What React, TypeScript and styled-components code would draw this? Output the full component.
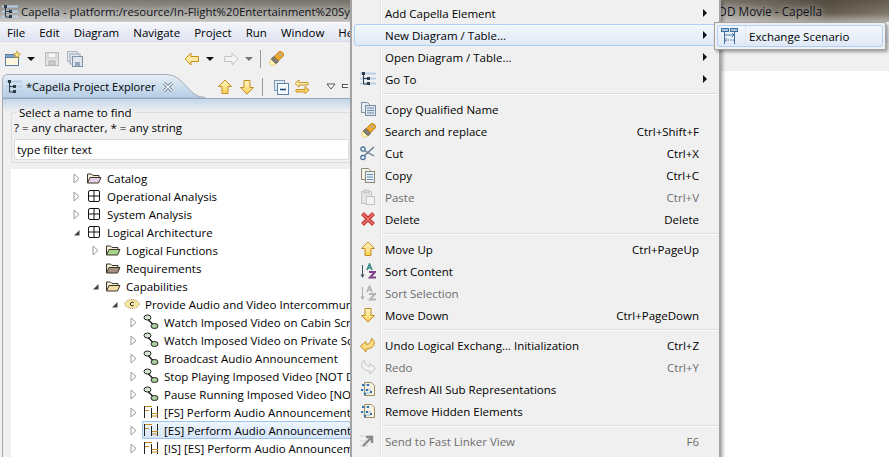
import React from 'react';
import styled, { createGlobalStyle } from 'styled-components';

const Global = createGlobalStyle`
  html, body { margin: 0; padding: 0; background: #f0f0f0; }
  body { font-family: "Open Sans", "Noto Sans", sans-serif; font-size: 11.5px; color: #000; }
  * { box-sizing: border-box; }
`;

const Window = styled.div`
  position: relative;
  width: 889px;
  height: 457px;
  overflow: hidden;
  background: #f0f0f0;
`;

const TitleBar = styled.div`
  height: 22px;
  display: flex;
  align-items: center;
  padding: 1px 67px 0 2px;
  background:
    linear-gradient(180deg, rgba(50, 42, 34, .35) 0%, rgba(255, 255, 255, .0) 60%, rgba(255, 255, 255, .45) 100%),
    linear-gradient(90deg, #a8a7a3 0%, #9a968f 40%, #8d8a83 60%, #9e9a92 80%, #655c50 93%, #7f7769 100%);
`;

const TitleText = styled.span<{ $end?: boolean }>`
  margin-left: ${p => (p.$end ? 'auto' : '3px')};
  font-size: ${p => (p.$end ? '11.8px' : '11.4px')};
  line-height: 21px;
  white-space: nowrap;
  color: #10131a;
  text-shadow: 0 0 6px rgba(255, 255, 255, .75);
`;

const MenuBar = styled.div`
  height: 19px;
  display: flex;
  align-items: center;
  padding-left: 7px;
  gap: 14px;
  background: linear-gradient(180deg, #f4f5fa 0%, #dfe4f3 100%);
  border-top: 1px solid #fafafa;
`;

const MenuBarItem = styled.span`
  line-height: 17px;
  white-space: nowrap;
`;

const ToolBar = styled.div`
  height: 30px;
  display: flex;
  align-items: center;
  padding: 4px 0 0 5px;
  border-top: 1px solid #d8dbe4;
  background: #f0f0f0;
`;

const ToolSlot = styled.span<{ $left?: number }>`
  display: inline-flex;
  margin-left: ${p => p.$left ?? 0}px;
`;

const ToolDivider = styled.span<{ $left: number }>`
  width: 1px;
  height: 18px;
  margin-left: ${p => p.$left}px;
  background: #9a9a9a;
`;

const DropCaret = styled.span<{ $left: number; $muted?: boolean }>`
  width: 0;
  height: 0;
  margin-left: ${p => p.$left}px;
  border-left: 4px solid transparent;
  border-right: 4px solid transparent;
  border-top: 4px solid ${p => (p.$muted ? '#777' : '#111')};
`;

const Workbench = styled.div`
  display: flex;
  height: 386px;
`;

const Explorer = styled.section`
  width: 352px;
  flex: none;
  padding: 3px 0 0 2px;
  overflow: hidden;
`;

const Editor = styled.main`
  flex: 1;
  background: #fff;
`;

const TabStrip = styled.div`
  display: flex;
  align-items: center;
  height: 25px;
  padding-top: 1px;
  border-bottom: 1px solid #97a7b8;
`;

const Tab = styled.div`
  position: relative;
  width: 204px;
  height: 24px;
  flex: none;
  display: flex;
  align-items: center;
  padding-left: 4px;
  gap: 4px;
`;

const TabShape = styled.svg`
  position: absolute;
  left: 0;
  top: -1px;
`;

const TabIcon = styled.span`
  position: relative;
  display: inline-flex;
`;

const TabLabel = styled.span`
  position: relative;
  font-size: 11.1px;
  white-space: nowrap;
  width: 133px;
`;

const PanelBody = styled.div`
  height: 359px;
  padding: 6px 0 0 8px;
  border-left: 1px solid #a8a8a8;
  background: linear-gradient(180deg, #c3d6ea 0px, #f0f0f0 13px);
`;

const FilterGroup = styled.fieldset`
  margin: 0;
  padding: 0 0 1px 2px;
  height: 58px;
  border: 1px solid #d5dfe5;
  border-radius: 3px;
`;

const FilterLegend = styled.legend`
  margin-left: 3px;
  padding: 0 2px;
  line-height: 15px;
`;

const FilterHint = styled.div`
  line-height: 15px;
  margin-bottom: 4px;
`;

const FilterInput = styled.div`
  width: 335px;
  height: 21px;
  padding-left: 2px;
  line-height: 19px;
  background: #fff;
  border: 1px solid #dcdcdc;
  border-radius: 2px;
`;

const Tree = styled.div`
  margin-top: 6px;
  height: 292px;
  background: #fff;
  overflow: hidden;
`;

const TreeRow = styled.div<{ $level: number }>`
  display: flex;
  align-items: center;
  height: 18px;
  padding-left: ${p => 60 + p.$level * 19}px;
  white-space: nowrap;
`;

const Twisty = styled.span`
  width: 11px;
  flex: none;
  display: inline-flex;
  justify-content: center;
`;

const TreeCell = styled.div<{ $selected?: boolean }>`
  flex: 1;
  display: flex;
  align-items: center;
  gap: 5px;
  height: 18px;
  margin-left: 3px;
  border: 1px solid ${p => (p.$selected ? '#9fc5ee' : 'transparent')};
  border-right: none;
  border-radius: 2px 0 0 2px;
  background: ${p => (p.$selected ? 'linear-gradient(180deg, #eef5fd, #d4e5f8)' : 'transparent')};
`;

const ContextMenu = styled.div`
  position: absolute;
  left: 350px;
  top: 0;
  width: 371px;
  height: 470px;
  padding: 2px 2px;
  background: #f0f0f0;
  border-left: 2px solid #a3a3a3;
  border-right: 2px solid #a3a3a3;
  box-shadow: 2px 2px 3px rgba(0, 0, 0, .3);
`;

const MenuRow = styled.div<{ $active?: boolean; $disabled?: boolean }>`
  position: relative;
  display: flex;
  align-items: center;
  height: 22px;
  color: ${p => (p.$disabled ? '#6d6d6d' : '#000')};
  border: 1px solid ${p => (p.$active ? '#aecff7' : 'transparent')};
  border-radius: 3px;
  background: ${p => (p.$active ? 'linear-gradient(180deg, #f3f7fc, #dfe9f6)' : 'transparent')};
`;

const MenuIcon = styled.span`
  width: 25px;
  flex: none;
  display: inline-flex;
  justify-content: center;
`;

const MenuLabel = styled.span`
  flex: 1;
  padding-left: 5px;
  white-space: nowrap;
`;

const MenuShortcut = styled.span`
  white-space: nowrap;
`;

const MenuArrow = styled.span<{ $show?: boolean }>`
  width: 17px;
  flex: none;
  display: inline-flex;
  justify-content: flex-end;
  padding-right: 9px;
  &::after {
    content: '';
    display: ${p => (p.$show ? 'block' : 'none')};
    border-top: 4px solid transparent;
    border-bottom: 4px solid transparent;
    border-left: 4px solid #111;
  }
`;

const MenuSeparator = styled.div`
  height: 8px;
  margin-left: 27px;
  display: flex;
  align-items: center;
  &::before {
    content: '';
    flex: 1;
    height: 2px;
    background: linear-gradient(180deg, #dcdcdc 50%, #fff 50%);
  }
`;

const Gutter = styled.div`
  position: absolute;
  left: 28px;
  top: 0;
  bottom: 0;
  width: 2px;
  background: linear-gradient(90deg, #e2e3e3 50%, #fff 50%);
`;

const SubMenu = styled.div`
  position: absolute;
  left: 714px;
  top: 22px;
  width: 172px;
  height: 28px;
  padding: 2px;
  background: #f0f0f0;
  border: 1px solid #a3a3a3;
  box-shadow: 2px 2px 3px rgba(0, 0, 0, .35);
`;

const SubRow = styled.div`
  position: relative;
  height: 22px;
  display: flex;
  align-items: center;
  padding-left: 3px;
  gap: 11px;
  border: 1px solid #aecff7;
  border-radius: 3px;
  background: linear-gradient(180deg, #f3f7fc, #dfe9f6);
  white-space: nowrap;
`;

const SubGutter = styled.span`
  position: absolute;
  left: 27px;
  top: 0;
  bottom: 0;
  width: 1px;
  background: #dfe5ee;
`;

type IconProps = { color?: string };

const Svg = ({ children, w = 16, h = 16 }: { children: React.ReactNode; w?: number; h?: number }) => (
  <svg width={w} height={h} viewBox={`0 0 ${w} ${h}`} fill="none">{children}</svg>
);

const OutlineIcon = () => (
  <Svg>
    <path d="M0 2.5h16M0 7.5h16M0 12.5h16" stroke="#b9cfe8" strokeWidth="2" />
    <path d="M3.500 2v11h4M3.500 7.500h4" stroke="#2d3a48" />
    <rect x="2" y="1" width="3" height="3" fill="#2d3a48" />
    <rect x="7" y="6" width="3" height="3" fill="#2d3a48" />
    <rect x="7" y="11" width="3" height="3" fill="#2d3a48" />
  </Svg>
);

const NewIcon = () => (
  <Svg>
    <rect x="0.5" y="3.5" width="13" height="11" fill="#fff8dc" stroke="#5b7da3" />
    <rect x="0.5" y="3.5" width="13" height="3" fill="#7fa4cc" stroke="#5b7da3" />
    <path d="M12 0l1 2.500 2.500.5-2 1.500.5 2.500-2-1.400-2 1.400.5-2.500-2-1.500 2.500-.5z" fill="#fde58a" stroke="#b98a1a" strokeWidth=".7" />
  </Svg>
);

const SaveIcon = () => (
  <Svg>
    <path d="M1.5 1.5h13v13h-13z" fill="#e6e6e6" stroke="#b8b8b8" />
    <rect x="4" y="2" width="8" height="5" fill="#f7f7f7" stroke="#c4c4c4" />
    <rect x="5" y="10" width="6" height="4" fill="#cfcfcf" stroke="#b0b0b0" />
  </Svg>
);

const SaveAllIcon = () => (
  <Svg>
    <rect x="0.5" y="0.5" width="10" height="10" fill="#e2e7ec" stroke="#aab6c2" />
    <rect x="3" y="3" width="10" height="10" fill="#e2e7ec" stroke="#9aa8b6" />
    <rect x="5.500" y="5.500" width="10" height="10" fill="#e2e7ec" stroke="#7f92a8" />
    <rect x="8" y="11" width="5" height="4" fill="#98a9bd" />
  </Svg>
);

const ArrowShape = ({ rotate = 0, fill = '#fde9a0', stroke = '#c58d1c' }: { rotate?: number; fill?: string; stroke?: string }) => (
  <Svg>
    <g transform={`rotate(${rotate} 8 8)`}>
      <path d="M1 8l6-6v3.500h7.500v5H7V14z" fill={fill} stroke={stroke} strokeLinejoin="round" />
    </g>
  </Svg>
);

const GoldArrow = ({ rotate }: { rotate: number }) => (
  <svg width="16" height="16" viewBox="0 0 16 16" fill="none">
    <defs>
      <linearGradient id={`gold${rotate}`} x1="0" y1="0" x2="0" y2="1" gradientTransform={`rotate(${-rotate} .5 .5)`}>
        <stop offset="0" stopColor="#fff6c8" />
        <stop offset="1" stopColor="#fbcf57" />
      </linearGradient>
    </defs>
    <g transform={`rotate(${rotate} 8 8)`}>
      <path d="M1 8l6.500-6.500V5h7v6h-7v3.500z" fill={`url(#gold${rotate})`} stroke="#c58d1c" strokeLinejoin="round" />
    </g>
  </svg>
);

const TorchIcon = () => (
  <Svg>
    <g transform="rotate(45 8 8)">
      <path d="M6 15.500h4l1.500-4.500h-7z" fill="#fff4b8" stroke="#e6bd56" strokeWidth=".7" />
      <rect x="4.500" y="7.500" width="7" height="4" rx="1" fill="#857e72" stroke="#5d574e" strokeWidth=".7" />
      <rect x="5" y="-1" width="6" height="8.500" rx="1" fill="#f2a92c" stroke="#a86e0c" strokeWidth=".8" />
      <circle cx="8" cy="2" r="1" fill="#cfe0f0" stroke="#6c88a6" strokeWidth=".5" />
    </g>
  </Svg>
);

const CollapseIcon = () => (
  <Svg>
    <rect x="1.5" y="1.5" width="10" height="10" fill="#e2eaf2" stroke="#7f9ab6" />
    <rect x="4.5" y="4.5" width="11" height="11" fill="#f7fafd" stroke="#5d82a8" />
    <path d="M7 10.500h6" stroke="#1f4e7d" strokeWidth="1.600" />
  </Svg>
);

const LinkIcon = () => (
  <Svg>
    <path d="M5 1L1 4.500 5 8V6h9V3.500H5z" fill="#fdeeb0" stroke="#c58d1c" strokeWidth=".9" />
    <path d="M11 7.500l4 3.500-4 3.500V13H2v-2.500h9z" fill="#fbd66a" stroke="#c58d1c" strokeWidth=".9" />
  </Svg>
);

const ViewMenuIcon = () => (
  <Svg w={10} h={7}>
    <path d="M1 1h8L5 6z" fill="#fff" stroke="#555" />
  </Svg>
);

const MinimizeIcon = () => (
  <Svg w={6} h={5}>
    <rect x="0.5" y="0.5" width="8" height="3" fill="#fff" stroke="#555" />
  </Svg>
);

const CloseIcon = () => (
  <Svg w={10} h={10}>
    <path d="M1 1l8 8M9 1l-8 8" stroke="#5a6b80" strokeWidth="3" />
    <path d="M1 1l8 8M9 1l-8 8" stroke="#fff" strokeWidth="1.400" />
  </Svg>
);

const Folder = ({ color = '#e8d58a' }: IconProps) => (
  <Svg>
    <path d="M1.500 13V4h4l1.500 1.500h6V8" fill="#f6f0dc" stroke="#3a3428" strokeLinejoin="round" />
    <path d="M1.500 13l2.500-5.500h11L12.500 13z" fill={color} stroke="#3a3428" strokeLinejoin="round" />
  </Svg>
);

const GridIcon = () => (
  <Svg>
    <rect x="2.500" y="2.500" width="11" height="11" rx="1.500" stroke="#111" />
    <path d="M8 2.500v11M2.500 8h11" stroke="#111" />
  </Svg>
);

const CapabilityIcon = () => (
  <Svg>
    <ellipse cx="8" cy="8" rx="7.200" ry="4.400" fill="#f6e3a6" stroke="#a88a3a" strokeDasharray="1 1" />
    <path d="M9.600 6.600a2 1.800 0 1 0 0 2.800" stroke="#222" strokeWidth="1" />
  </Svg>
);

const ChainIcon = () => (
  <Svg>
    <path d="M4 4.500l7 7" stroke="#111" strokeWidth="1.300" />
    <ellipse cx="4.500" cy="3.500" rx="3.500" ry="2.500" fill="#d6e8d0" stroke="#222" />
    <ellipse cx="11.500" cy="12" rx="3.500" ry="2.500" fill="#a9d3a0" stroke="#222" />
  </Svg>
);

const LadderIcon = () => (
  <Svg>
    <path d="M1.500 2v12" stroke="#222" />
    <path d="M8.500 4v10M14.500 2v12" stroke="#222" />
    <path d="M2 2.500h7M2 6.500h4" stroke="#c18a1d" strokeWidth="1.200" />
    <path d="M9 9.500h6M9 12h6" stroke="#c18a1d" strokeWidth="1.200" />
  </Svg>
);

const TwistyOpen = () => (
  <Svg w={7} h={7}>
    <path d="M6.500 1v5.500H1z" fill="#444" />
  </Svg>
);

const TwistyClosed = () => (
  <Svg w={7} h={11}>
    <path d="M1 1l5 4.500L1 10z" fill="#fff" stroke="#9a9a9a" />
  </Svg>
);

const CopyNameIcon = () => (
  <Svg>
    <path d="M1.500 1.500h6l2 2v8h-8z" fill="#e6eef6" stroke="#7f8fa0" />
    <rect x="5.500" y="4.500" width="10" height="10" fill="#dbe6f1" stroke="#7f8fa0" />
    <path d="M7 7h7M7 9.500h7M7 12h7" stroke="#6d86a3" />
  </Svg>
);

const ScissorsIcon = () => (
  <Svg>
    <path d="M4.500 5.500L14 11M4.500 10.500L14 2" stroke="#66788c" strokeWidth="1.400" />
    <circle cx="3" cy="12.500" r="2.200" stroke="#3f6a9a" strokeWidth="1.200" />
    <circle cx="3" cy="4" r="2.200" stroke="#3f6a9a" strokeWidth="1.200" />
  </Svg>
);

const CopyIcon = () => (
  <Svg>
    <path d="M1.500 1.500h7l2 2v9h-9z" fill="#f4f4ec" stroke="#8b8b74" />
    <rect x="5.500" y="4.500" width="9" height="11" fill="#e6eff8" stroke="#8b8b74" />
    <path d="M7 7.500h6M7 10h6M7 12.500h6" stroke="#6d90b5" />
  </Svg>
);

const PasteIcon = () => (
  <Svg>
    <rect x="1.500" y="2.500" width="10" height="12" fill="#e4e4e4" stroke="#c4c4c4" />
    <rect x="4" y="1" width="5" height="3" fill="#d8d8d8" stroke="#c4c4c4" />
    <rect x="6.500" y="7.500" width="8" height="8" fill="#f4f4f4" stroke="#c4c4c4" />
  </Svg>
);

const DeleteIcon = () => (
  <Svg>
    <path d="M2.500 2.500l11 11M13.500 2.500l-11 11" stroke="#c83a3a" strokeWidth="4" />
    <path d="M3 3l10 10M13 3L3 13" stroke="#ef7a6e" strokeWidth="1.400" />
  </Svg>
);

const SortIcon = ({ muted }: { muted?: boolean }) => (
  <Svg>
    <path d="M2.500 2v11" stroke={muted ? '#aaa' : '#3f5468'} />
    <path d="M0.500 11.500h4L2.500 15z" fill={muted ? '#aaa' : '#3f5468'} />
    <path d="M7 7l2.500-6L12 7M8 5h3" stroke={muted ? '#b4b4b4' : '#3b8a86'} strokeWidth="1.600" />
    <path d="M9 9h6l-5 5.500h6" stroke={muted ? '#b4b4b4' : '#80408a'} strokeWidth="2" />
  </Svg>
);

const UndoIcon = () => (
  <Svg>
    <path d="M0.500 9L6 4.500v2.700c3 .2 5-1.500 5.500-5.700C15 2.500 17 11.500 6 12v3z" fill="#fbdc82" stroke="#c58d1c" strokeLinejoin="round" />
  </Svg>
);

const RedoIcon = () => (
  <Svg>
    <path d="M15.500 9L10 4.500v2.700C7 7.400 5 5.700 4.500 1.500 1 2.500-1 11.500 10 12v3z" fill="#f2f2f2" stroke="#c2c2c2" strokeLinejoin="round" />
  </Svg>
);

const DiagramDocIcon = () => (
  <Svg>
    <path d="M4.500 1.500h7l3 3v10h-10z" fill="#f6f3e4" stroke="#9b8f62" />
    <path d="M2.500 4h7M2 9h9M3 12h7" stroke="#7fa7cf" strokeWidth=".8" />
    <g fill="#2e6fb0">
      <rect x="2" y="3" width="2" height="2" />
      <rect x="7" y="3" width="2" height="2" />
      <rect x="1" y="8" width="2" height="2" />
      <rect x="6" y="8" width="2" height="2" />
      <rect x="10" y="10" width="2" height="2" />
      <rect x="4" y="12" width="2" height="2" />
    </g>
  </Svg>
);

const FastLinkerIcon = () => (
  <Svg>
    <path d="M0 3h12M0 8h6M0 13h8" stroke="#e0e0e0" strokeWidth="2" />
    <path d="M3 13L11 5M6 4h6v6" stroke="#8a8a8a" strokeWidth="2.400" />
  </Svg>
);

const ScenarioIcon = () => (
  <Svg w={17} h={16}>
    <rect x="0.5" y="0.5" width="7" height="3" fill="#a9c6e6" stroke="#3f6f9f" />
    <rect x="9.500" y="0.500" width="7" height="3" fill="#a9c6e6" stroke="#3f6f9f" />
    <path d="M3.500 4v12M13.500 4v12" stroke="#3f6f9f" />
    <path d="M4 7h9M11 5l2 2-2 2" stroke="#3f6f9f" strokeWidth=".9" />
    <path d="M13 12H4M6 10l-2 2 2 2" stroke="#3f6f9f" strokeWidth=".9" strokeDasharray="1.500 1" />
  </Svg>
);

const menuItems = ['File', 'Edit', 'Diagram', 'Navigate', 'Project', 'Run', 'Window', 'Help'];

type TreeNode = {
  level: number;
  twisty?: 'open' | 'closed';
  icon: React.ReactNode;
  label: string;
  selected?: boolean;
};

const treeNodes: TreeNode[] = [
  { level: 0, twisty: 'closed', icon: <Folder color="#e6cfe8" />, label: 'Catalog' },
  { level: 0, twisty: 'closed', icon: <GridIcon />, label: 'Operational Analysis' },
  { level: 0, twisty: 'closed', icon: <GridIcon />, label: 'System Analysis' },
  { level: 0, twisty: 'open', icon: <GridIcon />, label: 'Logical Architecture' },
  { level: 1, twisty: 'closed', icon: <Folder color="#a6d68c" />, label: 'Logical Functions' },
  { level: 1, icon: <Folder color="#a58f80" />, label: 'Requirements' },
  { level: 1, twisty: 'open', icon: <Folder color="#f3dfa6" />, label: 'Capabilities' },
  { level: 2, twisty: 'open', icon: <CapabilityIcon />, label: 'Provide Audio and Video Intercommunication Services' },
  { level: 3, twisty: 'closed', icon: <ChainIcon />, label: 'Watch Imposed Video on Cabin Screen' },
  { level: 3, twisty: 'closed', icon: <ChainIcon />, label: 'Watch Imposed Video on Private Screen' },
  { level: 3, twisty: 'closed', icon: <ChainIcon />, label: 'Broadcast Audio Announcement' },
  { level: 3, twisty: 'closed', icon: <ChainIcon />, label: 'Stop Playing Imposed Video [NOT DETAILED]' },
  { level: 3, twisty: 'closed', icon: <ChainIcon />, label: 'Pause Running Imposed Video [NOT DETAILED]' },
  { level: 3, twisty: 'closed', icon: <LadderIcon />, label: '[FS] Perform Audio Announcement' },
  { level: 3, twisty: 'closed', icon: <LadderIcon />, label: '[ES] Perform Audio Announcement', selected: true },
  { level: 3, twisty: 'closed', icon: <LadderIcon />, label: '[IS] [ES] Perform Audio Announcement' },
];

type MenuEntry =
  | 'separator'
  | { label: string; icon?: React.ReactNode; shortcut?: string; arrow?: boolean; active?: boolean; disabled?: boolean };

const contextEntries: MenuEntry[] = [
  { label: 'Add Capella Element', arrow: true },
  { label: 'New Diagram / Table...', arrow: true, active: true },
  { label: 'Open Diagram / Table...', arrow: true },
  { label: 'Go To', icon: <OutlineIcon />, arrow: true },
  'separator',
  { label: 'Copy Qualified Name', icon: <CopyNameIcon /> },
  { label: 'Search and replace', icon: <TorchIcon />, shortcut: 'Ctrl+Shift+F' },
  { label: 'Cut', icon: <ScissorsIcon />, shortcut: 'Ctrl+X' },
  { label: 'Copy', icon: <CopyIcon />, shortcut: 'Ctrl+C' },
  { label: 'Paste', icon: <PasteIcon />, shortcut: 'Ctrl+V', disabled: true },
  { label: 'Delete', icon: <DeleteIcon />, shortcut: 'Delete' },
  'separator',
  { label: 'Move Up', icon: <GoldArrow rotate={90} />, shortcut: 'Ctrl+PageUp' },
  { label: 'Sort Content', icon: <SortIcon /> },
  { label: 'Sort Selection', icon: <SortIcon muted />, disabled: true },
  { label: 'Move Down', icon: <GoldArrow rotate={270} />, shortcut: 'Ctrl+PageDown' },
  'separator',
  { label: 'Undo Logical Exchang... Initialization', icon: <UndoIcon />, shortcut: 'Ctrl+Z' },
  { label: 'Redo', icon: <RedoIcon />, shortcut: 'Ctrl+Y', disabled: true },
  { label: 'Refresh All Sub Representations', icon: <DiagramDocIcon /> },
  { label: 'Remove Hidden Elements', icon: <DiagramDocIcon /> },
  'separator',
  { label: 'Send to Fast Linker View', icon: <FastLinkerIcon />, shortcut: 'F6', disabled: true },
];

export default function App() {
  return (
    <Window>
      <Global />
      <TitleBar>
        <OutlineIcon />
        <TitleText>Capella - platform:/resource/In-Flight%20Entertainment%20System</TitleText>
        <TitleText $end>DD Movie - Capella</TitleText>
      </TitleBar>
      <MenuBar>
        {menuItems.map(m => <MenuBarItem key={m}>{m}</MenuBarItem>)}
      </MenuBar>
      <ToolBar>
        <NewIcon />
        <DropCaret $left={6} />
        <ToolSlot $left={9}><SaveIcon /></ToolSlot>
        <ToolSlot $left={7}><SaveAllIcon /></ToolSlot>
        <ToolSlot $left={101}><ArrowShape /></ToolSlot>
        <DropCaret $left={6} />
        <ToolSlot $left={9}><ArrowShape rotate={180} fill="#f4f4f4" stroke="#c4c4c4" /></ToolSlot>
        <DropCaret $left={6} $muted />
        <ToolDivider $left={7} />
        <ToolSlot $left={7}><TorchIcon /></ToolSlot>
      </ToolBar>
      <Workbench>
        <Explorer>
          <TabStrip>
            <Tab>
              <TabShape width="204" height="24" viewBox="0 0 204 24">
                <defs>
                  <linearGradient id="tabFill" x1="0" y1="0" x2="0" y2="1">
                    <stop offset="0" stopColor="#e6eef6" />
                    <stop offset="1" stopColor="#b5cde6" />
                  </linearGradient>
                </defs>
                <path d="M0.500 24V6Q0.500 0.500 6 0.500H165C182 0.500 186 23.500 203 23.500V24z" fill="url(#tabFill)" stroke="#a5aeb8" />
              </TabShape>
              <TabIcon><OutlineIcon /></TabIcon>
              <TabLabel>*Capella Project Explorer</TabLabel>
              <TabIcon><CloseIcon /></TabIcon>
            </Tab>
            <ToolSlot $left={11}><GoldArrow rotate={90} /></ToolSlot>
            <ToolSlot $left={6}><GoldArrow rotate={270} /></ToolSlot>
            <ToolDivider $left={7} />
            <ToolSlot $left={10}><CollapseIcon /></ToolSlot>
            <ToolSlot $left={5}><LinkIcon /></ToolSlot>
            <ToolSlot $left={16}><ViewMenuIcon /></ToolSlot>
            <ToolSlot $left={6}><MinimizeIcon /></ToolSlot>
          </TabStrip>
          <PanelBody>
            <FilterGroup>
              <FilterLegend>Select a name to find</FilterLegend>
              <FilterHint>? = any character, * = any string</FilterHint>
              <FilterInput>type filter text</FilterInput>
            </FilterGroup>
            <Tree>
              {treeNodes.map(n => (
                <TreeRow key={n.label} $level={n.level}>
                  <Twisty>
                    {n.twisty === 'open' && <TwistyOpen />}
                    {n.twisty === 'closed' && <TwistyClosed />}
                  </Twisty>
                  <TreeCell $selected={n.selected}>
                    {n.icon}
                    <span>{n.label}</span>
                  </TreeCell>
                </TreeRow>
              ))}
            </Tree>
          </PanelBody>
        </Explorer>
        <Editor />
      </Workbench>
      <ContextMenu>
        <Gutter />
        {contextEntries.map((e, i) =>
          e === 'separator' ? (
            <MenuSeparator key={i} />
          ) : (
            <MenuRow key={e.label} $active={e.active} $disabled={e.disabled}>
              <MenuIcon>{e.icon}</MenuIcon>
              <MenuLabel>{e.label}</MenuLabel>
              {e.shortcut && <MenuShortcut>{e.shortcut}</MenuShortcut>}
              <MenuArrow $show={e.arrow} />
            </MenuRow>
          )
        )}
      </ContextMenu>
      <SubMenu>
        <SubRow>
          <SubGutter />
          <ScenarioIcon />
          <span>Exchange Scenario</span>
        </SubRow>
      </SubMenu>
    </Window>
  );
}
